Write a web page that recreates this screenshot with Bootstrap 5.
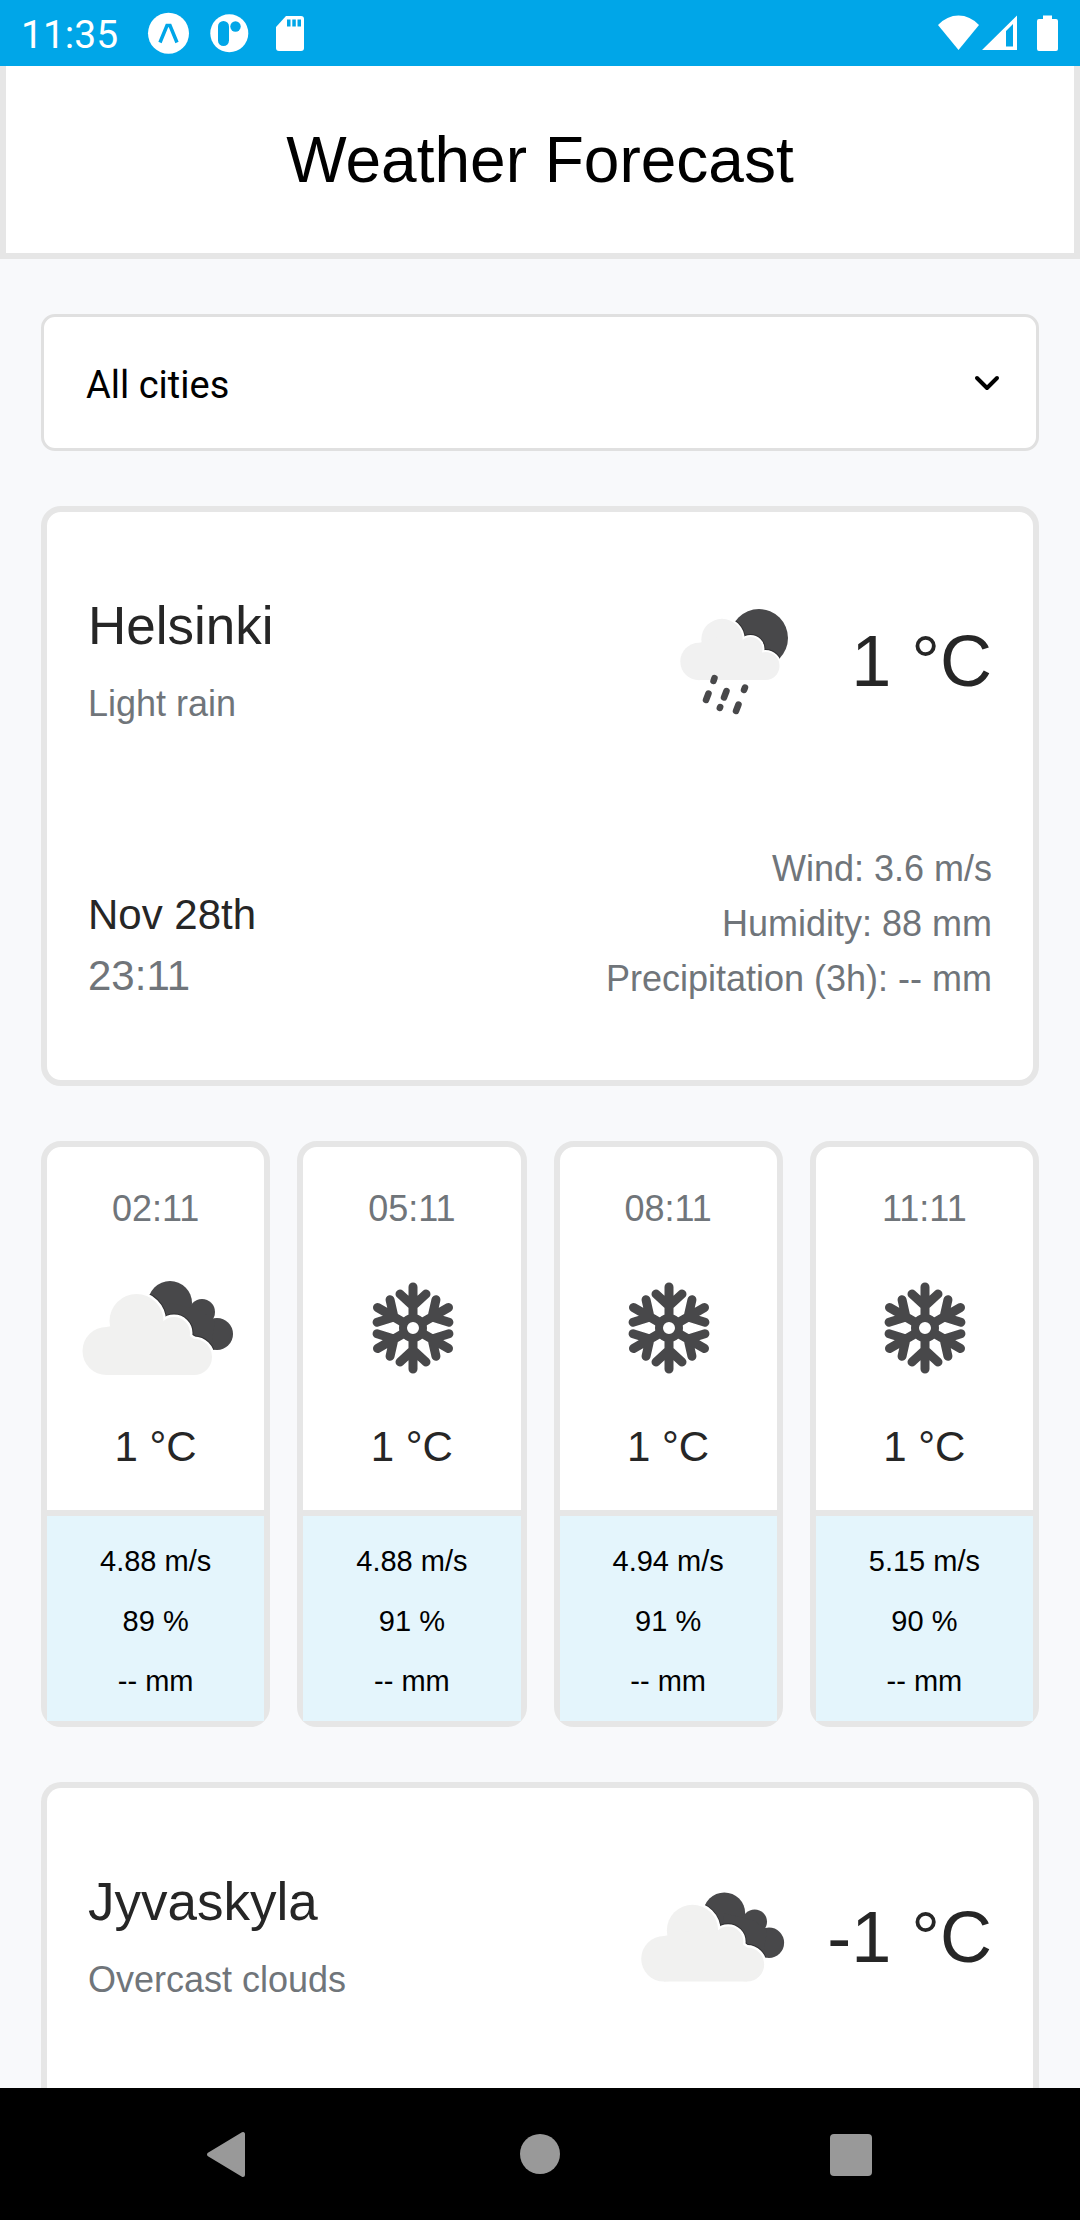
<!DOCTYPE html>
<html lang="en">
<head>
<meta charset="utf-8">
<meta name="viewport" content="width=device-width, initial-scale=1">
<title>Weather Forecast</title>
<link href="https://cdn.jsdelivr.net/npm/bootstrap@5.3.0/dist/css/bootstrap.min.css" rel="stylesheet">
<style>
  :root { --line: #e6e6e6; --ink: #262626; --soft: #70757a; --gap: 55px; }
  body { font-family: "Liberation Sans", Arial, sans-serif; background: #f8f9fb; color: var(--ink); }
  svg { display: block; flex: none; }

  .status-bar { height: 66px; background: #00a6e8; color: #fff; padding: 0 21px; }
  .status-clock { font: 39px/44px Roboto, sans-serif; }
  .status-apps { margin-left: 26px; }
  .app-header { border: 6px solid var(--line); border-top: 0; height: 193px; }
  .app-title { font-size: 64px; line-height: 72px; color: #000; font-weight: 400; }
  .app-main { padding: var(--gap) 41px 0; gap: var(--gap); min-height: 0; }

  .city-select {
    --bs-form-select-bg-img: url("data:image/svg+xml,%3Csvg xmlns='http://www.w3.org/2000/svg' viewBox='0 0 28 28'%3E%3Cpath d='M4 9l10 10L24 9' fill='none' stroke='%23000' stroke-width='4' stroke-linecap='round' stroke-linejoin='round'/%3E%3C/svg%3E");
    height: 137px; padding: 4px 90px 0 42px; border: 3px solid #e0e0e0; border-radius: 14px;
    font: 38px/46px Roboto, sans-serif; color: #000;
    background-color: #fff; background-position: right 35px center; background-size: 28px 28px;
  }

  .panel { border: 6px solid var(--line); border-radius: 20px; background: #fff; }
  .city-panel { padding: 74px 41px; gap: 105px; }
  .city-panel.is-cut { border-bottom: 0; border-radius: 20px 20px 0 0; padding-bottom: 0; min-height: 0; }
  .city-name { font-size: 53px; line-height: 64px; font-weight: 400; margin-bottom: 22px; }
  .city-now { gap: 41px; }
  .big-icon { width: 150px; height: 150px; }
  .temp-now { font-size: 72px; line-height: 80px; }
  .note { font-size: 36px; line-height: 48px; color: var(--soft); }
  .note-list { line-height: 55px; }
  .day { font-size: 42px; line-height: 61px; }
  .soft { color: var(--soft); }

  .hours { gap: 27px; }
  .hour-panel { flex: 1 1 0; }
  .hour-top { padding: 38px 0 35px; border-bottom: 6px solid var(--line); }
  .hour-icon { width: 158px; height: 158px; margin: 16px 0 12px; }
  .hour-temp { font-size: 42px; line-height: 56px; }
  .hour-data { padding: 15px 0 10px; background: #e4f5fc; color: #000; font-size: 29px; line-height: 60px; }

  .nav-keys { height: 132px; background: #000; padding: 0 74px; }
  .nav-keys button { background: none; border: 0; padding: 0; flex: 1 1 0; }
</style>
</head>
<body>
<svg width="0" height="0" class="position-absolute" aria-hidden="true">
  <defs>
    <clipPath id="dark-clip"><circle cx="93" cy="54" r="22"/><circle cx="125" cy="63" r="13"/><circle cx="140" cy="85" r="16"/><path d="M93 54L125 62L138 72L134 98L90 80Z"/></clipPath>
    <g id="pale-cloud">
      <circle cx="29.500" cy="102" r="24"/><circle cx="59.500" cy="72" r="27"/><circle cx="97" cy="84" r="16"/><circle cx="117" cy="108" r="18"/>
      <path d="M29.500 126H117V90L97 76L60 72L29.500 78Z"/>
    </g>
    <symbol id="clouds" viewBox="0 0 158 158">
      <g fill="#48484a"><circle cx="93" cy="54" r="22"/><circle cx="125" cy="63" r="13"/><circle cx="140" cy="85" r="16"/><path d="M93 54L125 62L138 72L134 98L90 80Z"/></g>
      <g clip-path="url(#dark-clip)"><use href="#pale-cloud" fill="#303032" stroke="#303032" stroke-width="7"/></g>
      <use href="#pale-cloud" fill="#fff" stroke="#fff" stroke-width="5"/>
      <use href="#pale-cloud" fill="#f1f1f0"/>
    </symbol>
    <g id="rain-cloud">
      <circle cx="39" cy="75.500" r="18.700"/><circle cx="62" cy="53.500" r="20.700"/><circle cx="90.500" cy="63" r="12"/><circle cx="105.500" cy="80" r="14"/>
      <path d="M39 94H105.500V70L90 58L62 50L39 57Z"/>
    </g>
    <clipPath id="moon-clip"><circle cx="99" cy="52" r="29"/></clipPath>
    <symbol id="rain" viewBox="0 0 150 150">
      <circle cx="99" cy="52" r="29" fill="#48484a"/>
      <g clip-path="url(#moon-clip)"><use href="#rain-cloud" fill="#303032" stroke="#303032" stroke-width="6"/></g>
      <use href="#rain-cloud" fill="#fff" stroke="#fff" stroke-width="4"/>
      <use href="#rain-cloud" fill="#f1f1f1"/>
      <path fill="none" stroke="#48484a" stroke-width="6.500" stroke-linecap="round" d="M54.500 92l-1 3M48.500 107.500l-2.500 6.500M66.500 105l-2.500 6.500M85 101.500l-1 2.500M60.200 121l-.4 1M78.500 118.500l-2.500 6.500"/>
    </symbol>
    <g id="snow-arm"><path d="M0-11V-41M0-22L-13-34M0-22L13-34"/></g>
    <symbol id="snow" viewBox="0 0 158 158">
      <g transform="translate(80 79)" fill="none" stroke="#48484a" stroke-width="9" stroke-linecap="round">
        <circle r="10" stroke-width="8"/>
        <use href="#snow-arm"/><use href="#snow-arm" transform="rotate(60)"/><use href="#snow-arm" transform="rotate(120)"/>
        <use href="#snow-arm" transform="rotate(180)"/><use href="#snow-arm" transform="rotate(240)"/><use href="#snow-arm" transform="rotate(300)"/>
      </g>
    </symbol>
  </defs>
</svg>

<div class="d-flex flex-column vh-100 overflow-hidden">
  <div class="status-bar d-flex align-items-center justify-content-between flex-shrink-0">
    <div class="d-flex align-items-center">
      <span class="status-clock pt-1">11:35</span>
      <svg class="status-apps" width="164" height="42" viewBox="144 12 164 42" aria-hidden="true">
        <circle cx="168.500" cy="33.300" r="20.500" fill="#fff"/>
        <path d="M160 42.500L167 25.500H170L177 42.500" fill="none" stroke="#00a6e8" stroke-width="3.500"/>
        <circle cx="229.300" cy="33.300" r="19" fill="#fff"/>
        <rect x="218" y="21" width="11" height="25" rx="5.500" fill="#00a6e8"/><circle cx="235.500" cy="26.500" r="5.200" fill="#00a6e8"/>
        <path d="M286 16H301Q304 16 304 19V48Q304 51 301 51H279Q276 51 276 48V27Z" fill="#fff"/>
        <path d="M287 19.500h3.500v7H287zM292.300 19.500h3.500v7h-3.500zM297.500 19.500h3.500v7h-3.500z" fill="#00a6e8"/>
      </svg>
    </div>
    <svg width="122" height="42" viewBox="937 12 122 42" aria-hidden="true">
      <path d="M958.500 50L938 25Q947 15.500 958.500 15.500T979 25Z" fill="#fff"/>
      <path d="M982 50L1017 15.500V50ZM1006 31V46.500H1013V24Z" fill="#fff" fill-rule="evenodd"/>
      <path d="M1043 15.500H1052V19H1056Q1058 19 1058 21V49Q1058 51 1056 51H1039Q1037 51 1037 49V21Q1037 19 1039 19H1043Z" fill="#fff"/>
    </svg>
  </div>

  <header class="app-header bg-white d-flex align-items-center justify-content-center flex-shrink-0">
    <h1 class="app-title m-0">Weather Forecast</h1>
  </header>

  <main class="app-main d-flex flex-column flex-fill">
    <select class="city-select form-select flex-shrink-0" aria-label="City">
      <option selected>All cities</option>
    </select>

    <section class="panel city-panel d-flex flex-column flex-shrink-0">
      <div class="d-flex align-items-center justify-content-between">
        <div>
          <h2 class="city-name mt-0">Helsinki</h2>
          <div class="note">Light rain</div>
        </div>
        <div class="city-now d-flex align-items-center">
          <svg class="big-icon" role="img" aria-label="Light rain"><use href="#rain"/></svg>
          <span class="temp-now">1 °C</span>
        </div>
      </div>
      <div class="d-flex align-items-end justify-content-between">
        <div class="day">
          <div>Nov 28th</div>
          <div class="soft">23:11</div>
        </div>
        <div class="note note-list text-end">
          <div>Wind: 3.6 m/s</div>
          <div>Humidity: 88 mm</div>
          <div>Precipitation (3h): -- mm</div>
        </div>
      </div>
    </section>

    <section class="hours d-flex flex-shrink-0">
      <article class="panel hour-panel text-center">
        <div class="hour-top d-flex flex-column align-items-center">
          <div class="note">02:11</div>
          <svg class="hour-icon" aria-hidden="true"><use href="#clouds"/></svg>
          <div class="hour-temp">1 °C</div>
        </div>
        <div class="hour-data"><div>4.88 m/s</div><div>89 %</div><div>-- mm</div></div>
      </article>
      <article class="panel hour-panel text-center">
        <div class="hour-top d-flex flex-column align-items-center">
          <div class="note">05:11</div>
          <svg class="hour-icon" aria-hidden="true"><use href="#snow"/></svg>
          <div class="hour-temp">1 °C</div>
        </div>
        <div class="hour-data"><div>4.88 m/s</div><div>91 %</div><div>-- mm</div></div>
      </article>
      <article class="panel hour-panel text-center">
        <div class="hour-top d-flex flex-column align-items-center">
          <div class="note">08:11</div>
          <svg class="hour-icon" aria-hidden="true"><use href="#snow"/></svg>
          <div class="hour-temp">1 °C</div>
        </div>
        <div class="hour-data"><div>4.94 m/s</div><div>91 %</div><div>-- mm</div></div>
      </article>
      <article class="panel hour-panel text-center">
        <div class="hour-top d-flex flex-column align-items-center">
          <div class="note">11:11</div>
          <svg class="hour-icon" aria-hidden="true"><use href="#snow"/></svg>
          <div class="hour-temp">1 °C</div>
        </div>
        <div class="hour-data"><div>5.15 m/s</div><div>90 %</div><div>-- mm</div></div>
      </article>
    </section>

    <section class="panel city-panel is-cut flex-fill">
      <div class="d-flex align-items-center justify-content-between">
        <div>
          <h2 class="city-name mt-0">Jyvaskyla</h2>
          <div class="note">Overcast clouds</div>
        </div>
        <div class="city-now d-flex align-items-center">
          <svg class="big-icon" role="img" aria-label="Overcast clouds"><use href="#clouds"/></svg>
          <span class="temp-now">-1 °C</span>
        </div>
      </div>
    </section>
  </main>

  <nav class="nav-keys d-flex align-items-center flex-shrink-0" aria-label="System">
    <button type="button" aria-label="Back"><svg class="mx-auto" width="48" height="48" viewBox="0 0 48 48"><path d="M4 24.500L38 4V45Z" fill="#999" stroke="#999" stroke-width="4" stroke-linejoin="round"/></svg></button>
    <button type="button" aria-label="Home"><svg class="mx-auto" width="48" height="48" viewBox="0 0 48 48"><circle cx="24" cy="24" r="20" fill="#999"/></svg></button>
    <button type="button" aria-label="Recent apps"><svg class="mx-auto" width="48" height="48" viewBox="0 0 48 48"><rect x="3" y="4" width="42" height="42" rx="4" fill="#999"/></svg></button>
  </nav>
</div>
<script src="https://cdn.jsdelivr.net/npm/bootstrap@5.3.0/dist/js/bootstrap.bundle.min.js"></script>
</body>
</html>
